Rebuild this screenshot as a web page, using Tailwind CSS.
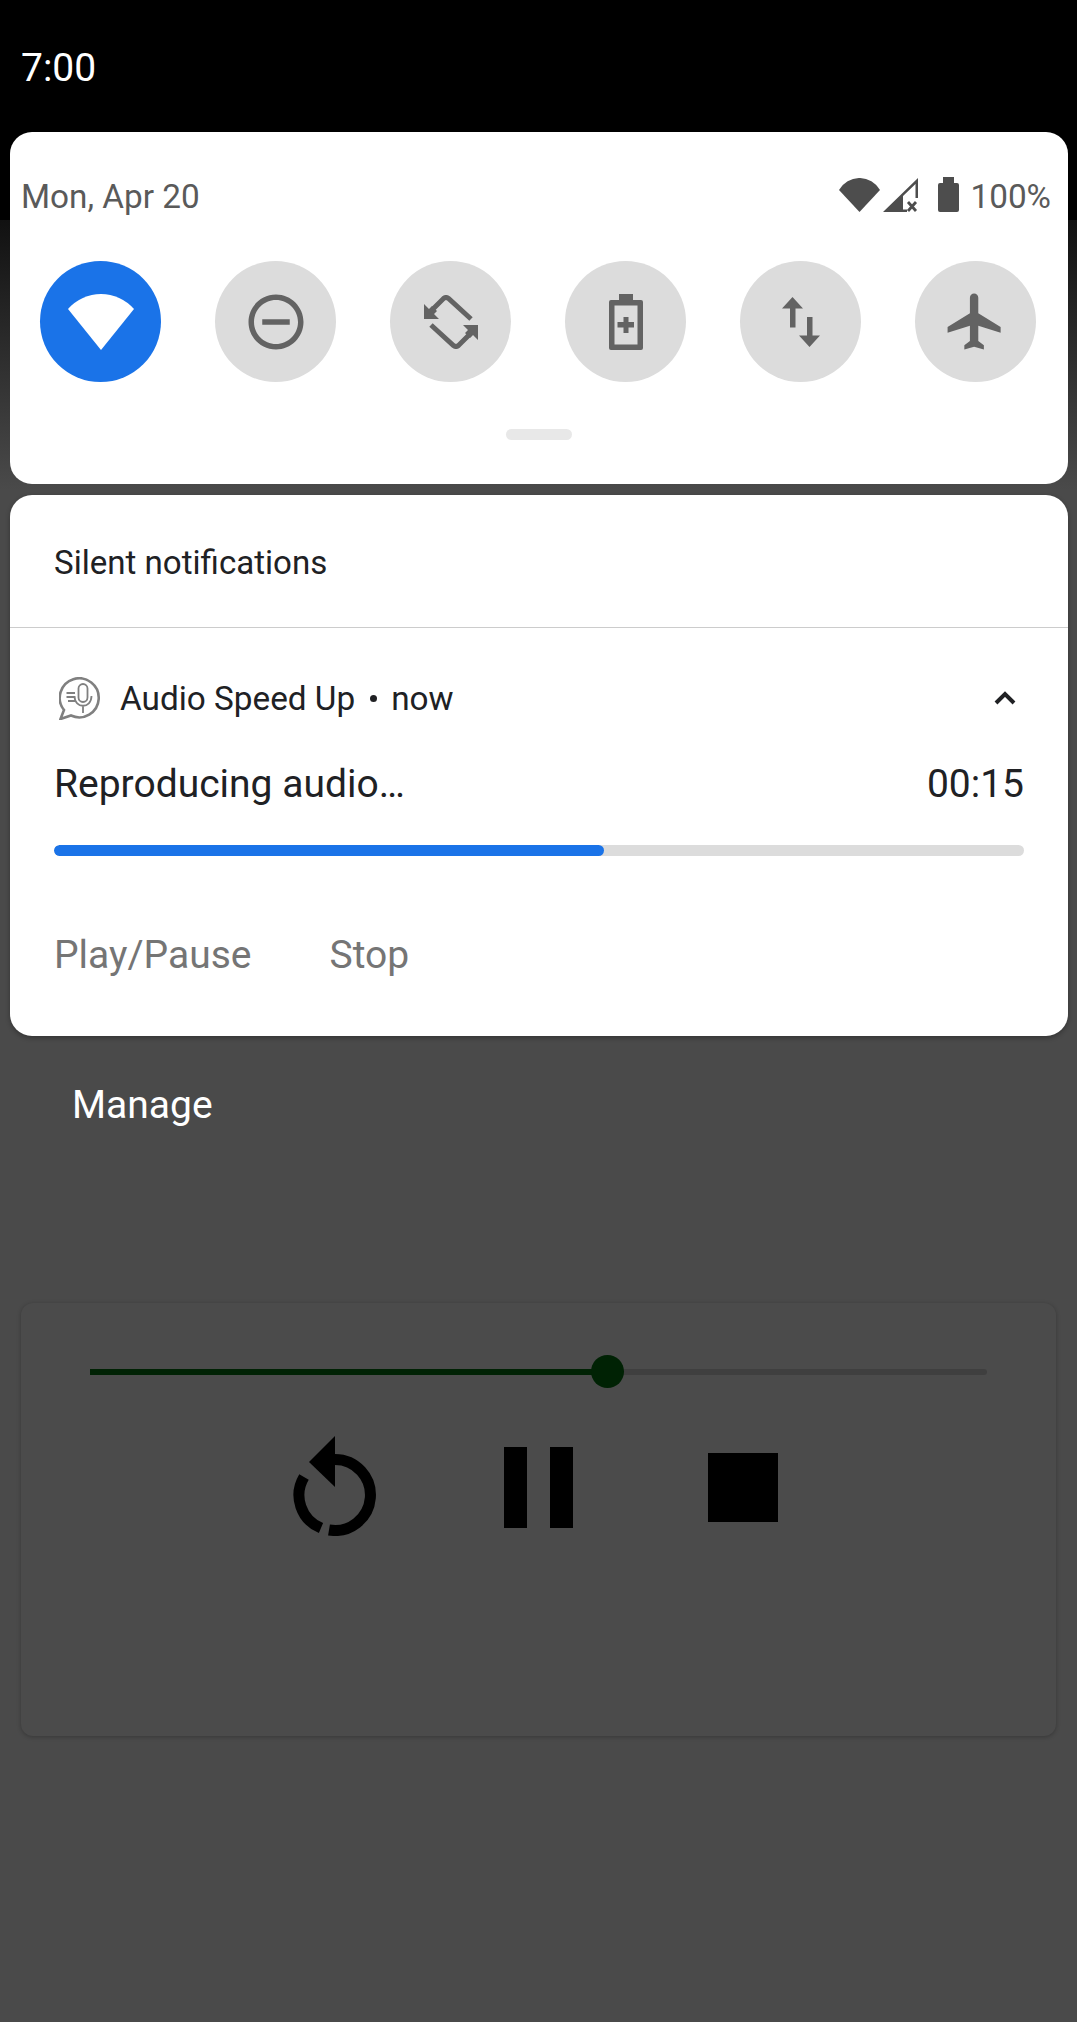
<!DOCTYPE html>
<html lang="en">
<head>
    <meta charset="UTF-8">
    <title>Audio Speed Up</title>
    <meta name="viewport" content="width=device-width, initial-scale=1.0">
    <script src="https://cdn.jsdelivr.net/npm/@tailwindcss/browser@4"></script>
</head>
<body class="bg-[#4a4a4a]">
<div class="w-[1077px] h-[2022px] overflow-hidden font-['Roboto',sans-serif] bg-[linear-gradient(#000_220px,#111_220px,#4a4a4a_490px)]">

    <!-- status bar -->
    <div class="h-[132px] pl-[21px] pt-[46px] text-[39px] leading-[44px] text-white">7:00</div>

    <!-- quick settings -->
    <div class="ml-[10px] mr-[9px] h-[352px] rounded-[22px] bg-white">
        <div class="flex h-[129px] items-start pt-[43px] pl-[11px] text-[33.3px] leading-[40px] text-[#5a5a5a]">
            <span class="mt-[2px]">Mon, Apr 20</span>
            <div class="ml-auto flex items-start pr-[17px]">
                <svg class="mt-[3px] w-[41px] h-[34px]" viewBox="0 0 41 34" fill="#4d4d4d"><path d="M0 12A23.500 23.500 0 0 1 41 12L20.500 34Z"/></svg>
                <svg class="mt-[3px] ml-[3px] w-[35px] h-[34px]" viewBox="0 0 35 34">
                    <path fill="#4d4d4d" d="M0 34L35 0V20H32.500V6L20 18V31.500H24V34Z"/>
                    <path stroke="#4d4d4d" stroke-width="2.800" d="M25 24L33 33M33 24L25 33"/>
                </svg>
                <svg class="mt-[2px] ml-[20px] w-[21px] h-[35px]" viewBox="0 0 21 35" fill="#4d4d4d"><path d="M5 0H16V6H19Q21 6 21 8V33Q21 35 19 35H2Q0 35 0 33V8Q0 6 2 6H5Z"/></svg>
                <span class="ml-[11px] mt-[2px]">100%</span>
            </div>
        </div>
        <div class="flex pl-[30px] gap-[54px]">
            <div class="flex h-[121px] w-[121px] items-center justify-center rounded-full bg-[#1a73e8]">
                <svg class="w-[66px] h-[56px]" viewBox="0 0 66 56" fill="#fff"><path d="M0 15A44 44 0 0 1 66 15L33 56Z"/></svg>
            </div>
            <div class="flex h-[121px] w-[121px] items-center justify-center rounded-full bg-[#dcdcdc]">
                <svg class="w-[66px] h-[66px]" viewBox="0 0 24 24" fill="#636363"><path d="M12 2C6.480 2 2 6.480 2 12s4.480 10 10 10 10-4.480 10-10S17.520 2 12 2zm0 18c-4.410 0-8-3.590-8-8s3.590-8 8-8 8 3.590 8 8-3.590 8-8 8zM7 11h10v2H7z"/></svg>
            </div>
            <div class="flex h-[121px] w-[121px] items-center justify-center rounded-full bg-[#dcdcdc]">
                <svg class="w-[54px] h-[54px]" viewBox="0 0 54 54" fill="none" stroke="#636363" stroke-width="5">
                    <path d="M47 24L24.500 3.500Q22 1.500 19.500 3.500L7 16"/>
                    <path fill="#636363" stroke="none" d="M0 9V24H15L10 19L13 16L8 11L5 14Z"/>
                    <path d="M7 30L29.500 50.500Q32 52.500 34.500 50.500L47 38"/>
                    <path fill="#636363" stroke="none" d="M54 45V30H39L44 35L41 38L46 43L49 40Z"/>
                </svg>
            </div>
            <div class="flex h-[121px] w-[121px] items-center justify-center rounded-full bg-[#dcdcdc]">
                <svg class="w-[34px] h-[56px]" viewBox="0 0 34 56" fill="#636363"><path fill-rule="evenodd" d="M10 0H24V6H32Q34 6 34 8V54Q34 56 32 56H2Q0 56 0 54V8Q0 6 2 6H10ZM5.500 11.500V50.500H28.500V11.500ZM14.500 23H19.500V28H25V33.500H19.500V39H14.500V33.500H8.500V28H14.500Z"/></svg>
            </div>
            <div class="flex h-[121px] w-[121px] items-center justify-center rounded-full bg-[#dcdcdc]">
                <svg class="w-[38px] h-[50px]" viewBox="0 0 38 50" fill="#636363"><path d="M10.500 0L21 11.500H13.500V30.500H8V11.500H0Z"/><path d="M27.500 50L38 38.500H30.500V20H25V38.500H17Z"/></svg>
            </div>
            <div class="flex h-[121px] w-[121px] items-center justify-center rounded-full bg-[#dcdcdc]">
                <svg class="w-[67px] h-[67px]" viewBox="0 0 24 24" fill="#636363"><path d="M21 16v-2l-8-5V3.500c0-.830-.670-1.500-1.500-1.500S10 2.670 10 3.500V9l-8 5v2l8-2.500V19l-2 1.500V22l3.500-1 3.500 1v-1.500L13 19v-5.500l8 2.500z"/></svg>
            </div>
        </div>
        <div class="mx-auto mt-[47px] h-[11px] w-[66px] rounded-full bg-[#e8e8e8]"></div>
    </div>

    <!-- notification -->
    <div class="ml-[10px] mr-[9px] mt-[11px] h-[541px] rounded-[22px] bg-white text-[#202124] shadow-[0_2px_5px_rgba(0,0,0,0.3)]">
        <div class="h-[133px] border-b border-[#cccccc] pl-[44px] pt-[48px] text-[33.1px] leading-[40px]">Silent notifications</div>
        <div class="flex items-center pl-[49px] pr-[51px] pt-[49px]">
            <svg class="w-[43px] h-[43px]" viewBox="0 0 43 43" fill="none" stroke="#808080">
                <path stroke-width="2.600" d="M5 33A19.500 19.500 0 1 1 12 38.500L1.500 42Z"/>
                <rect x="19.500" y="7" width="9" height="18" rx="4.500" stroke-width="1.800"/>
                <path stroke-width="1.800" d="M15.500 19C15.500 32 32.500 32 32.500 19M24 28V36"/>
                <path stroke-width="1.800" d="M7.500 16H16M7.500 20H15M9 24H16"/>
            </svg>
            <span class="ml-[18px] text-[33.3px] leading-[40px]">Audio Speed Up</span>
            <span class="ml-[15px] h-[7px] w-[7px] rounded-full bg-[#202124]"></span>
            <span class="ml-[14px] text-[33.3px] leading-[40px]">now</span>
            <svg class="ml-auto -mt-[1px] w-[24px] h-[14px]" viewBox="0 0 24 14" fill="none" stroke="#202124" stroke-width="4"><path d="M3 12L12 3L21 12"/></svg>
        </div>
        <div class="flex justify-between pl-[44px] pr-[44px] pt-[40px] text-[39px] leading-[48px]">
            <span>Reproducing audio…</span>
            <span>00:15</span>
        </div>
        <div class="mx-[44px] mt-[37px] h-[11px] overflow-hidden rounded-full bg-[#dcdcdc]">
            <div class="h-full w-[550px] rounded-full bg-[#1a73e8]"></div>
        </div>
        <div class="flex gap-[78px] pl-[44px] pt-[74px] text-[39px] leading-[50px] text-[#757575]">
            <span>Play/Pause</span>
            <span>Stop</span>
        </div>
    </div>

    <div class="pl-[72px] pt-[44px] text-[39px] leading-[50px] text-white">Manage</div>

    <!-- player card behind the shade -->
    <div class="mx-[21px] mt-[173px] h-[433px] rounded-[12px] bg-[#4b4b4b] shadow-[0_1px_4px_rgba(0,0,0,0.25)]">
        <div class="relative mx-[69px] pt-[66px]">
            <div class="h-[6px] rounded-full bg-[#3f3f3f]">
                <div class="h-full w-[518px] bg-[#002204]"></div>
            </div>
            <div class="absolute left-[501px] top-[52px] h-[33px] w-[33px] rounded-full bg-[#002204]"></div>
        </div>
        <div class="flex pl-[272px] pt-[61px]">
            <svg class="w-[84px] h-[100px]" viewBox="0 0 84 100" fill="none" stroke="#000" stroke-width="11">
                <path d="M42 23.500A35.500 35.500 0 1 1 36 94"/>
                <path d="M28 92A35.500 35.500 0 0 1 11 41"/>
                <path fill="#000" stroke="none" d="M42 0L16 26L42 51Z"/>
            </svg>
            <svg class="ml-[127px] mt-[11px] w-[69px] h-[81px]" viewBox="0 0 69 81" fill="#000"><path d="M0 0H23V81H0ZM46 0H69V81H46Z"/></svg>
            <svg class="ml-[135px] mt-[17px] w-[70px] h-[69px]" viewBox="0 0 70 69" fill="#000"><path d="M0 0H70V69H0Z"/></svg>
        </div>
    </div>
</div>
</body>
</html>
